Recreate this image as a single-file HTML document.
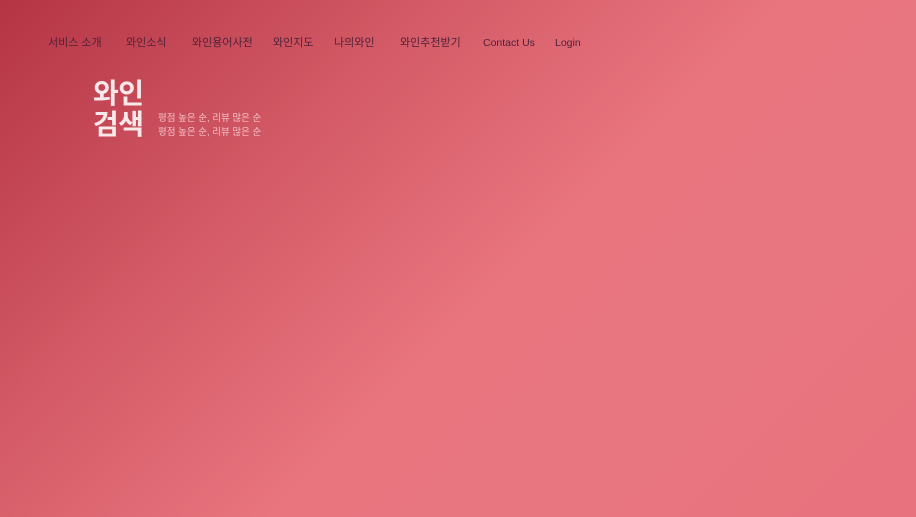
<!DOCTYPE html>
<html><head><meta charset="utf-8"><style>
html,body{margin:0;padding:0;width:916px;height:517px;overflow:hidden}
body{background:linear-gradient(135deg,#b53444 0%,#d35a66 30%,#e9757f 55%,#e87680 75%,#e8727d 100%);font-family:"Liberation Sans","Noto Sans CJK KR",sans-serif;position:relative}
.nav span{position:absolute;top:36px;font-size:11px;color:#4f2238;white-space:nowrap;line-height:14px}
.nav span.l{top:36px;font-size:10.5px}
.t{position:absolute;left:93px;color:#f8e8ea;font-weight:bold;font-size:28px;line-height:31px;top:78px;letter-spacing:-0.5px}
.s{position:absolute;left:158px;color:#f2c2c8;font-size:9.5px;line-height:14px;top:112px}
</style></head><body>
<div class="nav">
<span style="left:48px">서비스 소개</span>
<span style="left:126px">와인소식</span>
<span style="left:192px">와인용어사전</span>
<span style="left:273px">와인지도</span>
<span style="left:334px">나의와인</span>
<span style="left:400px">와인추천받기</span>
<span class="l" style="left:483px">Contact Us</span>
<span class="l" style="left:555px">Login</span>
</div>
<div class="t">와인<br>검색</div>
<div class="s">평점 높은 순, 리뷰 많은 순<br>평점 높은 순, 리뷰 많은 순</div>
</body></html>
